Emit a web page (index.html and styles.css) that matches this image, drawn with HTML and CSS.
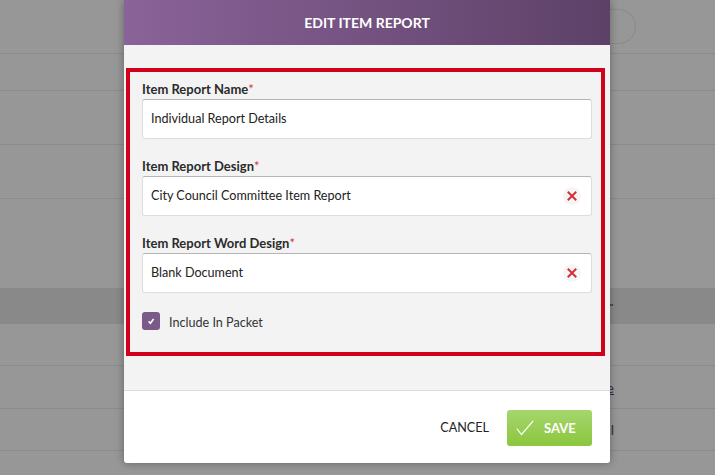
FILE: index.html
```html
<!DOCTYPE html>
<html>
<head>
<meta charset="utf-8">
<link rel="stylesheet" href="styles.css">
</head>
<body>
<div class="page">
  <div class="row r1"><span class="pill"></span></div>
  <div class="row r2"></div>
  <div class="row r3"></div>
  <div class="row r4"></div>
  <div class="row r5"></div>
  <div class="band"><span class="frag">Type&#711;</span></div>
  <div class="row r6"></div>
  <div class="row r7"><span class="frag link">Name</span></div>
  <div class="row r8"><span class="frag">l</span></div>
  <div class="row r9"></div>
</div>

<div class="modal">
  <div class="modal-header">EDIT ITEM REPORT</div>
  <div class="modal-body">
    <div class="highlight">
      <div class="field">
        <label class="label">Item Report Name<span class="req">*</span></label>
        <div class="input">Individual Report Details</div>
      </div>
      <div class="field">
        <label class="label">Item Report Design<span class="req">*</span></label>
        <div class="input">City Council Committee Item Report
          <span class="clear"><svg width="10" height="10" viewBox="0 0 10 10"><path d="M1.5 1.5 L8.5 8.5 M8.5 1.5 L1.5 8.5" stroke="#d3303a" stroke-width="2" stroke-linecap="square"/></svg></span>
        </div>
      </div>
      <div class="field">
        <label class="label">Item Report Word Design<span class="req">*</span></label>
        <div class="input">Blank Document
          <span class="clear"><svg width="10" height="10" viewBox="0 0 10 10"><path d="M1.5 1.5 L8.5 8.5 M8.5 1.5 L1.5 8.5" stroke="#d3303a" stroke-width="2" stroke-linecap="square"/></svg></span>
        </div>
      </div>
      <div class="check-row">
        <span class="checkbox"><svg width="10" height="10" viewBox="0 0 10 10"><path d="M2.6 5.4 L4.4 7.2 L7.6 3" fill="none" stroke="#fff" stroke-width="1.6"/></svg></span>
        <span class="check-label">Include In Packet</span>
      </div>
    </div>
  </div>
  <div class="modal-footer">
    <span class="cancel">CANCEL</span>
    <span class="save"><svg class="save-icon" width="18" height="16" viewBox="0 0 18 16"><path d="M0.8 8.5 L5.5 14.5 L17.2 0.8" fill="none" stroke="#fff" stroke-width="1.2"/></svg>SAVE</span>
  </div>
</div>
</body>
</html>
```
FILE: styles.css
```css
html, body {
  margin: 0;
  padding: 0;
}
body {
  width: 715px;
  height: 475px;
  overflow: hidden;
  background: #979797;
  font-family: Lato, "Open Sans", sans-serif;
  position: relative;
}
.page {
  display: flex;
  flex-direction: column;
}
.row {
  border-bottom: 1px solid #8b8b8b;
  box-sizing: border-box;
  position: relative;
}
.r1 { height: 54px; }
.r2 { height: 37px; }
.r3 { height: 54px; }
.r4 { height: 54px; }
.r5 { height: 89px; border-bottom: none; }
.band {
  height: 36px;
  background: #898989;
  position: relative;
}
.r6 { height: 42px; }
.r7 { height: 43px; }
.r8 { height: 42px; }
.r9 { height: 25px; border-bottom: none; }
.pill {
  position: absolute;
  left: 560px;
  top: 9px;
  width: 76px;
  height: 35px;
  box-sizing: border-box;
  border: 1px solid #8a8a8a;
  border-radius: 18px;
}
.frag {
  position: absolute;
  right: 101px;
  top: 12px;
  font-size: 14px;
  color: #2a3140;
}
.frag.link { text-decoration: underline; top: 13px; }

.modal {
  position: absolute;
  left: 124px;
  top: 0;
  width: 486px;
  height: 463px;
  display: flex;
  flex-direction: column;
  background: #fff;
  box-shadow: 0 0 8px rgba(0,0,0,0.35);
  border-radius: 0 0 3px 3px;
}
.modal-header {
  height: 45px;
  flex: none;
  background: linear-gradient(to right, #8a6399, #5d4167);
  color: #fff;
  font-weight: bold;
  font-size: 14px;
  display: flex;
  align-items: center;
  justify-content: center;
  padding-bottom: 1px;
  box-sizing: border-box;
}
.modal-body {
  height: 346px;
  flex: none;
  box-sizing: border-box;
  background: #f3f3f3;
  padding: 23px 5px 0 2px;
  border-bottom: 1px solid #dcdcdc;
}
.highlight {
  border: 4px solid #d0021b;
  padding: 9px 9px 20px 12px;
  height: 288px;
  box-sizing: border-box;
}
.field {
  display: flex;
  flex-direction: column;
  gap: 2px;
  margin-bottom: 19px;
}
.label {
  font-size: 13px;
  font-weight: bold;
  color: #2b2b2b;
  line-height: 16px;
}
.req {
  color: #d0343a;
  font-weight: normal;
}
.input {
  height: 40px;
  box-sizing: border-box;
  background: #fff;
  border: 1px solid #dedede;
  border-top-color: #b5b5b5;
  border-radius: 3px;
  display: flex;
  align-items: center;
  justify-content: space-between;
  padding: 0 10px 2px 8px;
  font-size: 12.6px;
  color: #222;
}
.clear {
  width: 18px;
  height: 18px;
  border-radius: 50%;
  background: #f5f5f5;
  display: flex;
  align-items: center;
  justify-content: center;
  margin-top: 2px;
}
.check-row {
  display: flex;
  align-items: center;
  gap: 9px;
  margin-top: 5px;
}
.checkbox {
  width: 18px;
  height: 18px;
  flex: none;
  border-radius: 3px;
  background: #7b5a88;
  display: flex;
  align-items: center;
  justify-content: center;
}
.check-label {
  font-size: 12.6px;
  color: #333;
  padding-top: 3px;
}
.modal-footer {
  flex: 1;
  display: flex;
  align-items: flex-start;
  justify-content: flex-end;
  padding: 19px 18px 0 0;
  gap: 18px;
}
.cancel {
  font-size: 12.6px;
  color: #222;
  line-height: 36px;
}
.save {
  width: 85px;
  height: 36px;
  box-sizing: border-box;
  border-radius: 3px;
  background: linear-gradient(to bottom, #a6d66e, #8bc63e);
  color: #fff;
  font-size: 13px;
  font-weight: bold;
  display: flex;
  align-items: center;
  padding-left: 9px;
  gap: 10px;
}
.save-icon {
  flex: none;
}
```
